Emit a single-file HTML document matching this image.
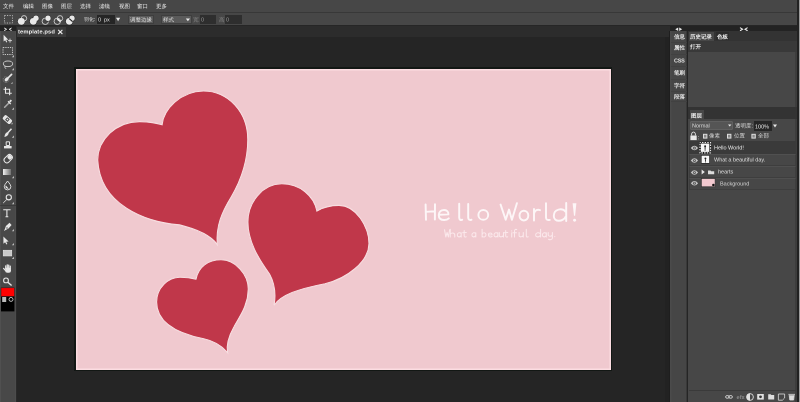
<!DOCTYPE html>
<html><head><meta charset="utf-8">
<style>
*{margin:0;padding:0;box-sizing:border-box}
html,body{width:800px;height:402px;overflow:hidden;background:#252525;font-family:"Liberation Sans",sans-serif;color:#e6e6e6}
.a{position:absolute}
#menubar{left:0;top:0;width:800px;height:13.3px;background:#474747;border-bottom:1.8px solid #383838}
.mi{position:absolute;top:-0.4px;font-size:11.4px;line-height:24px;color:#f2f2f2;white-space:nowrap;font-weight:normal;transform:scale(.5);transform-origin:0 0;will-change:transform}
#toolbar{left:0;top:12px;width:800px;height:14px;background:linear-gradient(transparent 0,transparent 1.3px,#474747 1.3px,#474747 13.4px,#262626 13.4px)}
.tt{position:absolute;font-size:11px;line-height:18px;transform:scale(.5);transform-origin:0 0;will-change:transform;color:#e0e0e0;white-space:nowrap}
.inp{position:absolute;background:#252525;height:9px;top:15px}
.btn{position:absolute;background:#5a5a5a;top:14.5px;height:9.5px;border:0.5px solid #3e3e3e}
#tabrow{left:0;top:26px;width:670px;height:11px;background:#2c2c2c}
#lefttools{left:0;top:31px;width:16.6px;height:371px;background:#484848;border-right:0.8px solid #2a2a2a;box-shadow:inset 1px 0 0 #505050,inset -1px 0 0 #4c4c4c}
#canvas{left:75.9px;top:68.9px;width:534.9px;height:300.8px;background:#f0c9cf;box-shadow:inset 0 0 0 1.5px #fcdde2}
#rcol{left:669.4px;top:31px;width:18.1px;height:371px;background:#464646;border-left:0.9px solid #1e1e1e;border-right:1.3px solid #393939;box-shadow:inset 1.5px 0 0 #4b4b4b}
#rpanel{left:687.5px;top:31px;width:112px;height:371px;background:#3d3d3d}
svg{position:absolute;overflow:visible}
</style></head><body>
<div id="menubar" class="a">
  <span class="mi" style="left:3px">文件</span>
  <span class="mi" style="left:22.7px">编辑</span>
  <span class="mi" style="left:41.6px">图像</span>
  <span class="mi" style="left:61.2px">图层</span>
  <span class="mi" style="left:80px">选择</span>
  <span class="mi" style="left:98.8px">滤镜</span>
  <span class="mi" style="left:118.8px">视图</span>
  <span class="mi" style="left:137.4px">窗口</span>
  <span class="mi" style="left:156.3px">更多</span>
</div>
<div id="toolbar" class="a">
  <svg style="left:0;top:0" width="250" height="14" viewBox="0 0 250 14">
    <rect x="4.5" y="3.5" width="8" height="7.5" fill="none" stroke="#cfcfcf" stroke-width="0.8" stroke-dasharray="1.2 1.3"/>
  </svg>
  <svg style="left:0;top:0" width="250" height="14" viewBox="0 0 250 14">
    <!-- icon1 new -->
    <g transform="translate(18,3)">
      <circle cx="3.3" cy="6.3" r="3.4" fill="#e8e8e8" stroke="#1c1c1c" stroke-width="0.9"/>
      <circle cx="6" cy="3.3" r="2.7" fill="none" stroke="#e8e8e8" stroke-width="0.8"/>
      <circle cx="3.3" cy="6.3" r="3.4" fill="#e8e8e8"/>
    </g>
    <g transform="translate(30,3)">
      <circle cx="3.3" cy="6.3" r="3.8" fill="#1c1c1c"/>
      <circle cx="6" cy="3.3" r="3.1" fill="#1c1c1c"/>
      <circle cx="3.3" cy="6.3" r="3.4" fill="#e8e8e8"/>
      <circle cx="6" cy="3.3" r="2.7" fill="#e8e8e8"/>
    </g>
    <g transform="translate(42,3)">
      <circle cx="3.3" cy="6.3" r="3.2" fill="none" stroke="#e0e0e0" stroke-width="0.8"/>
      <circle cx="6" cy="3.3" r="3.1" fill="#1c1c1c"/>
      <circle cx="6" cy="3.3" r="2.7" fill="#e8e8e8"/>
    </g>
    <g transform="translate(54,3)">
      <circle cx="3.3" cy="6.3" r="3.2" fill="none" stroke="#e0e0e0" stroke-width="0.8"/>
      <circle cx="6" cy="3.3" r="2.7" fill="none" stroke="#e0e0e0" stroke-width="0.8"/>
      <path d="M3.2 3.6 L6.6 6.6" stroke="#e8e8e8" stroke-width="1.6"/>
    </g>
    <g transform="translate(66,3)">
      <circle cx="3.3" cy="6.3" r="3.8" fill="#1c1c1c"/>
      <circle cx="6" cy="3.3" r="3.1" fill="#1c1c1c"/>
      <circle cx="3.3" cy="6.3" r="3.4" fill="#e8e8e8"/>
      <circle cx="6" cy="3.3" r="2.7" fill="#e8e8e8"/>
      <path d="M3.2 3.6 L6.6 6.6" stroke="#1c1c1c" stroke-width="1.2"/>
    </g>
    <path d="M116 5.8 L120.2 5.8 L118.1 9.2 Z" fill="#e8e8e8"/>
  </svg>
  <span class="tt" style="left:84px;font-size:10px;top:3px;color:#ececec">羽化:</span>
  <div class="inp" style="left:97px;width:17.5px;top:3px"></div>
  <span class="tt" style="left:98px;top:2.5px">0</span>
  <span class="tt" style="left:104px;top:2.5px">px</span>
  <div class="btn" style="left:128px;width:25.5px;top:2.5px"></div>
  <span class="tt" style="left:130px;top:2.5px">调整边缘</span>
  <div class="btn" style="left:161px;width:30.5px;top:2.5px"></div>
  <span class="tt" style="left:163px;top:2.5px">样式</span>
  <span class="tt" style="left:193px;top:2.5px;color:#8a8a8a">宽</span>
  <div class="inp" style="left:199.5px;width:16.5px;top:3px;background:#2e2e2e"></div>
  <span class="tt" style="left:200.5px;top:2.5px;color:#9a9a9a">0</span>
  <span class="tt" style="left:218.5px;top:2.5px;color:#8a8a8a">高</span>
  <div class="inp" style="left:225px;width:16.5px;top:3px;background:#2e2e2e"></div>
  <span class="tt" style="left:226px;top:2.5px;color:#9a9a9a">0</span>
  <svg style="left:0;top:0" width="250" height="14" viewBox="0 0 250 14"><path d="M185.8 6.6 L190 6.6 L187.9 9.2 Z" fill="#e8e8e8"/></svg>
</div>
<div id="tabrow" class="a"></div>
<div class="a" style="left:0;top:26px;width:16px;height:5px;background:#222"></div>
<svg style="left:0;top:26px" width="16" height="6" viewBox="0 0 16 6">
  <path d="M4.2 2 L6.6 3.3 L4.2 4.6 M11.6 2 L9.2 3.3 L11.6 4.6" fill="none" stroke="#e8e8e8" stroke-width="1"/>
</svg>
<div class="a" style="left:16.5px;top:27.2px;width:49px;height:10px;background:#3a3a3a"></div>
<span class="tt" style="left:18.3px;top:27.2px;color:#f4f4f4;font-weight:bold;font-size:11.6px;letter-spacing:0.2px">template.psd</span>
<svg style="left:0;top:26px" width="70" height="12" viewBox="0 0 70 12">
  <path d="M58.2 3.8 L62.4 8 M62.4 3.8 L58.2 8" stroke="#e8e8e8" stroke-width="1.1"/>
</svg>
<div id="lefttools" class="a"></div>
<svg style="left:0;top:0" width="16" height="402" viewBox="0 0 16 402">
 <!-- move -->
 <path d="M3.6 34.8 L3.6 41.6 L5.2 40.2 L6.3 42.4 L7.2 41.9 L6.2 39.8 L8.3 39.7 Z" fill="#e6e6e6"/>
 <path d="M10 38.6 V42.6 M8 40.6 H12" stroke="#e6e6e6" stroke-width="0.8"/>
 <!-- marquee -->
 <rect x="3" y="47.5" width="9.5" height="7" fill="none" stroke="#e6e6e6" stroke-width="0.8" stroke-dasharray="1.3 1"/>
 <path d="M14.0 55 L14.0 57.2 L11.8 57.2 Z" fill="#bdbdbd"/>
 <!-- lasso -->
 <ellipse cx="8" cy="63.8" rx="4.6" ry="2.8" fill="none" stroke="#e6e6e6" stroke-width="0.8"/>
 <path d="M5 66 Q4.5 68 6 68.8" fill="none" stroke="#e6e6e6" stroke-width="0.8"/>
 <path d="M14.0 68 L14.0 70.2 L11.8 70.2 Z" fill="#bdbdbd"/>
 <!-- quick select -->
 <circle cx="6" cy="79.6" r="2.9" fill="none" stroke="#b0b0b0" stroke-width="0.6" stroke-dasharray="0.9 0.7"/>
 <path d="M11.6 74.4 L8 78" stroke="#e6e6e6" stroke-width="1.7" stroke-linecap="round"/>
 <ellipse cx="6.6" cy="79.3" rx="2.3" ry="1.6" transform="rotate(-45 6.6 79.3)" fill="#e6e6e6"/>
 <path d="M12.6 82 L12.6 83.8 L10.8 83.8 Z" fill="#bdbdbd"/>
 <!-- crop -->
 <path d="M5.5 87 V93.2 H11.8 M3.5 89.2 H9.6 V95.2" fill="none" stroke="#e6e6e6" stroke-width="1.1"/>
 <!-- eyedropper -->
 <path d="M4.3 107.6 L9.3 102.6" stroke="#e6e6e6" stroke-width="1.3"/>
 <path d="M4.3 107.6 L9.3 102.6" stroke="#474747" stroke-width="0.4"/>
 <path d="M8 101.3 L10.8 104.1" stroke="#e6e6e6" stroke-width="1.3"/>
 <path d="M9.6 101.9 L11.4 100.1" stroke="#e6e6e6" stroke-width="1.8"/>
 <path d="M14.0 107.5 L14.0 109.7 L11.8 109.7 Z" fill="#bdbdbd"/>
 <!-- healing -->
 <g transform="rotate(40 7.4 119.6)"><rect x="2.6" y="117" width="9.6" height="5.2" rx="1.6" fill="#e6e6e6"/><rect x="5.8" y="117.9" width="3.2" height="3.4" fill="#474747"/><rect x="6.7" y="118.8" width="1.4" height="1.5" fill="#e6e6e6"/></g>
 <path d="M12.6 122.4 L12.6 124.2 L10.8 124.2 Z" fill="#bdbdbd"/>
 <!-- brush -->
 <path d="M11.5 128.8 L7.6 133" stroke="#e6e6e6" stroke-width="1.5"/>
 <path d="M7.8 132.2 Q5 132.2 4.4 137 Q8 136.5 8.6 133.6 Z" fill="#e6e6e6"/>
 <path d="M14.0 135.5 L14.0 137.7 L11.8 137.7 Z" fill="#bdbdbd"/>
 <!-- stamp -->
 <path d="M6.2 141.8 H9.5 V145.5 H6.2 Z" fill="none" stroke="#e6e6e6" stroke-width="1"/>
 <rect x="4" y="146" width="7.6" height="2.4" fill="#e6e6e6"/>
 <!-- eraser -->
 <g transform="rotate(-45 8.2 158.7)"><rect x="3.6" y="155.9" width="9.2" height="5.6" rx="2.6" fill="none" stroke="#e6e6e6" stroke-width="1"/><rect x="8.2" y="156.4" width="4.2" height="4.6" rx="1.8" fill="#e6e6e6"/></g>
 <!-- gradient -->
 <defs><linearGradient id="gr" x1="0" x2="1"><stop offset="0" stop-color="#f0f0f0"/><stop offset="1" stop-color="#707070"/></linearGradient></defs>
 <rect x="3" y="169" width="8" height="6" fill="url(#gr)"/>
 <path d="M14.0 176 L14.0 178.2 L11.8 178.2 Z" fill="#bdbdbd"/>
 <!-- blur drop -->
 <path d="M7.6 181 Q4.2 185 4.3 186.6 A3.3 3.3 0 0 0 10.9 186.6 Q11 185 7.6 181 Z" fill="none" stroke="#e6e6e6" stroke-width="0.9"/>
 <path d="M5.6 186.3 A2 2 0 0 0 8.6 188.4 L5.9 185.5 Z" fill="#e6e6e6"/>
 <!-- dodge -->
 <circle cx="8.8" cy="197.3" r="2.6" fill="none" stroke="#e6e6e6" stroke-width="1.1"/>
 <path d="M6.9 199.4 L3.2 203" stroke="#e6e6e6" stroke-width="0.9"/>
 <path d="M14.0 202 L14.0 204.2 L11.8 204.2 Z" fill="#bdbdbd"/>
 <rect x="0" y="205.3" width="16" height="0.6" fill="#333"/>
 <!-- T -->
 <path d="M3.2 209.8 H10.6 M6.9 209.8 V217 M5.5 216.8 H8.3" fill="none" stroke="#e6e6e6" stroke-width="1.1"/>
 <!-- pen -->
 <path d="M9.5 222.8 L11.6 224.9 L8.5 228.6 Q6 229.8 4 231 Q5 229 5.9 226.1 Z" fill="#e6e6e6"/>
 <circle cx="7" cy="228" r="0.7" fill="#474747"/>
 <path d="M14.0 229 L14.0 231.2 L11.8 231.2 Z" fill="#bdbdbd"/>
 <!-- path select -->
 <path d="M3.4 236.4 L3.4 243.8 L5.1 242.2 L6.4 244.6 L7.4 244 L6.2 241.7 L8.6 241.6 Z" fill="#e6e6e6"/>
 <path d="M14.0 243 L14.0 245.2 L11.8 245.2 Z" fill="#bdbdbd"/>
 <!-- rect -->
 <rect x="3.3" y="250.3" width="8.4" height="5.6" fill="#c8c8c8" stroke="#e6e6e6" stroke-width="0.7"/>
 <path d="M14.0 256.8 L14.0 259.0 L11.8 259.0 Z" fill="#bdbdbd"/>
 <!-- hand -->
 <rect x="5.2" y="267.6" width="5.8" height="5.2" rx="2" fill="#e6e6e6"/>
 <rect x="5.1" y="265.2" width="1.3" height="4" rx="0.6" fill="#e6e6e6"/>
 <rect x="6.6" y="264.2" width="1.3" height="4.5" rx="0.6" fill="#e6e6e6"/>
 <rect x="8.1" y="264.5" width="1.3" height="4.3" rx="0.6" fill="#e6e6e6"/>
 <rect x="9.6" y="265.6" width="1.3" height="3.8" rx="0.6" fill="#e6e6e6"/>
 <path d="M5.6 270.6 L3.6 268.4" stroke="#e6e6e6" stroke-width="1.3" stroke-linecap="round"/>
 <!-- zoom -->
 <circle cx="6" cy="280.4" r="2.4" fill="none" stroke="#e6e6e6" stroke-width="1.1"/>
 <path d="M7.8 282.2 L11.6 285.6" stroke="#e6e6e6" stroke-width="1.4"/>
 <!-- colors -->
 <rect x="1" y="295.8" width="13.4" height="15.6" fill="#000"/>
 <rect x="1" y="287.8" width="13.4" height="8.6" fill="#ff0000" stroke="#222" stroke-width="0.5"/>
 <rect x="2.2" y="297" width="4" height="5" fill="#bbb"/>
 <circle cx="11" cy="299.4" r="2" fill="none" stroke="#ccc" stroke-width="0.9"/>
</svg>
<div class="a" style="left:73.9px;top:66.8px;width:538.1px;height:304.5px;background:#121714"></div>
<div id="canvas" class="a"></div>
<svg style="left:0;top:0" width="800" height="402" viewBox="0 0 800 402">
  <g fill="#c0374a" stroke="#f7dde0" stroke-width="1.1">
    <path d="M162.1 124.8 C163.5 110 180 91.2 203.5 91 C228 91 247.8 112 247.8 139.5 C247.8 163 240 182 231.2 197 C222 212 215.8 226 217.3 244.6 C211 235.5 196 229 179.5 224.9 C145 222 100 205 97.7 160 C97.8 140 116 121.4 139.8 121.6 C148 121.8 157 123 162.1 124.8 Z"/>
    <path d="M316.9 211 C314 196 300 183.8 281.8 183.8 C262 183.8 247.9 203 247.9 222 C247.9 241 258 258 269.5 274 C275.5 285 275.5 297 274.1 305.2 C281.3 295 298 289 325 283.7 C346 279 369 262 369 243.5 C369 227 356 205.4 339 205.4 C330 205.4 321 208.5 316.9 211 Z"/>
    <path d="M196 279.1 C198.5 267 208 259.8 221 259.8 C235 259.8 248.3 274 248.3 289 C248.3 306 238.5 318 233.9 326.9 C228.8 336 226.2 345 227.6 352.6 C222.5 346.5 214 341 203.7 338.8 C180 334 156.6 324 156.6 302 C156.6 288 168 277.2 180 277.2 C187 277.2 193 278.3 196 279.1 Z"/>
  </g>
</svg>
<svg style="left:0;top:0" width="800" height="402" viewBox="0 0 800 402">
  <g fill="none" stroke="#fdf6f7" stroke-width="1.95" stroke-linecap="round" stroke-linejoin="round">
    <path d="M425.6 204.4 L426 219.8 M435 204.2 L434.9 219.6 M426 211.9 L434.8 211.3"/>
    <path d="M438.8 214.8 L448.4 214.4 C448.6 211.6 446.6 209.9 444 209.9 C440.8 209.9 438.8 212.2 438.8 215.2 C438.8 218.4 441.2 220 444.2 220 C446.4 220 447.8 219.4 448.8 218.4"/>
    <path d="M459.2 203.8 L459.2 217.5 C459.2 219.6 460.3 220.2 462.2 219.8"/>
    <path d="M468.2 204 L468.2 217.5 C468.2 219.6 469.5 220.2 471.5 219.8"/>
    <ellipse cx="483.3" cy="214.9" rx="4.9" ry="4.9"/>
    <path d="M500.6 204.6 L505.7 219.7 L509 209.6 L511.9 219.7 L516.9 203.2"/>
    <ellipse cx="523.9" cy="215.6" rx="4.4" ry="4.8"/>
    <path d="M534 209 L534 220.6 M534 213.5 C535 210.2 537.5 209.2 540 210.2"/>
    <path d="M546 203.2 L546 217.6 C546 219.8 547.5 220.4 549.8 219.9"/>
    <path d="M565.8 212 C564 209.5 561 209 558.5 209.6 C555 210.5 553.8 213.5 553.8 216 C553.8 219 556 220.8 558.8 220.8 C561.8 220.8 564.5 219 565.8 216.5 M566.2 203 L566.2 221"/>
  </g>
  <path d="M572.6 203.2 L576.4 203.2 L575.1 215.8 L574 215.8 Z" fill="#fdf6f7"/>
  <circle cx="574.6" cy="220.2" r="1.45" fill="#fdf6f7"/>
  <g fill="none" stroke="#fbe8eb" stroke-width="1.05" stroke-linecap="round" stroke-linejoin="round"><path transform="translate(444.5 237)" d="M0 -7.3 L1.3 0 L2.6 -4.6 L3.9 0 L5.2 -7.3"/><path transform="translate(449.75 237)" d="M0.5 -7.7 L0.5 0 M0.5 -2.6 C1 -4.5 5 -4.8 5 -2 L5 0"/><path transform="translate(456.9 237)" d="M4.2 -3.5 C3.5 -4.7 0.4 -4.7 0.4 -2 C0.4 0.4 3.5 0.4 4.2 -1.5 M4.3 -4.3 L4.3 0"/><path transform="translate(462.5 237)" d="M1.7 -6.6 L1.7 -0.9 C1.7 0 2.7 0.1 3.7 -0.3 M0.1 -4.2 L3.8 -4.4"/><path transform="translate(471.5 237)" d="M4.2 -3.5 C3.5 -4.7 0.4 -4.7 0.4 -2 C0.4 0.4 3.5 0.4 4.2 -1.5 M4.3 -4.3 L4.3 0"/><path transform="translate(481.6 237)" d="M0.5 -7.7 L0.5 0 M0.5 -2.4 C1.1 -4.8 4.4 -4.9 4.4 -2.2 C4.4 0.4 1.2 0.4 0.5 -0.9"/><path transform="translate(488 237)" d="M0.4 -2.1 L4.1 -2.3 C4.1 -4.3 0.4 -4.9 0.4 -2 C0.4 0.3 3.3 0.3 4.1 -0.6"/><path transform="translate(493.6 237)" d="M4.2 -3.5 C3.5 -4.7 0.4 -4.7 0.4 -2 C0.4 0.4 3.5 0.4 4.2 -1.5 M4.3 -4.3 L4.3 0"/><path transform="translate(498.8 237)" d="M0.5 -4.4 L0.5 -1.6 C0.5 0.4 4.3 0.4 4.6 -2 M4.7 -4.4 L4.7 0"/><path transform="translate(504 237)" d="M1.7 -6.6 L1.7 -0.9 C1.7 0 2.7 0.1 3.7 -0.3 M0.1 -4.2 L3.8 -4.4"/><path transform="translate(510.9 237)" d="M0.8 -4.2 L0.8 0 M0.8 -6.3 L0.8 -6.1"/><path transform="translate(512.9 237)" d="M3.8 -7.4 C2.5 -8 1.6 -7.3 1.6 -5.6 L1.6 0 M0 -4.2 L3.6 -4.3"/><path transform="translate(518.6 237)" d="M0.5 -4.4 L0.5 -1.6 C0.5 0.4 4.3 0.4 4.6 -2 M4.7 -4.4 L4.7 0"/><path transform="translate(525.5 237)" d="M0.8 -7.7 L0.8 -1 C0.8 0 1.8 0.2 2.7 -0.2"/><path transform="translate(535.2 237)" d="M5 -3.3 C4.2 -4.8 0.4 -4.8 0.4 -2 C0.4 0.4 4.1 0.4 5 -1.4 M5.4 -7.7 L5.4 0"/><path transform="translate(542 237)" d="M4.2 -3.5 C3.5 -4.7 0.4 -4.7 0.4 -2 C0.4 0.4 3.5 0.4 4.2 -1.5 M4.3 -4.3 L4.3 0"/><path transform="translate(547.8 237)" d="M0.4 -4.4 L0.4 -2.1 C0.4 -0.3 4 -0.3 4.4 -2.2 M4.6 -4.4 L4.6 1.1 C4.6 2.8 2 3 0.8 2.2"/><path transform="translate(554 237)" d="M0.8 -0.5 L0.8 -0.4"/></g>
</svg>
<div class="a" style="left:670px;top:26px;width:130px;height:5px;background:#232323"></div>
<div class="a" style="left:664.6px;top:37px;width:4.8px;height:365px;background:#222"></div>
<div id="rcol" class="a"></div>
<svg style="left:0;top:0" width="800" height="40" viewBox="0 0 800 40">
  <path d="M675.2 29.2 L678.2 27.4 L678.2 31 Z M682.2 29.2 L679.2 27.4 L679.2 31 Z" fill="#e8e8e8"/>
  <path d="M740 27.6 L742.6 29.2 L740 30.8 M747.6 27.6 L745 29.2 L747.6 30.8" fill="none" stroke="#eee" stroke-width="1.1"/>
</svg>
<div class="a" style="left:670.5px;top:42px;width:16px;height:0.6px;background:#414141"></div><div class="a" style="left:670.5px;top:53.9px;width:16px;height:0.6px;background:#414141"></div><div class="a" style="left:670.5px;top:65.8px;width:16px;height:0.6px;background:#414141"></div><div class="a" style="left:670.5px;top:78.5px;width:16px;height:0.6px;background:#414141"></div><div class="a" style="left:670.5px;top:90.5px;width:16px;height:0.6px;background:#414141"></div><div class="a" style="left:670.5px;top:101px;width:16px;height:0.6px;background:#414141"></div>
<span class="tt" style="left:673.5px;top:32px;font-weight:bold;color:#e4e4e4">信息</span>
<span class="tt" style="left:673.5px;top:43.2px;font-weight:bold;color:#e4e4e4">属性</span>
<span class="tt" style="left:673.5px;top:55.5px;letter-spacing:-0.5px;font-weight:bold;color:#e4e4e4">CSS</span>
<span class="tt" style="left:673.5px;top:67.8px;font-weight:bold;color:#e4e4e4">笔刷</span>
<span class="tt" style="left:673.5px;top:81px;font-weight:bold;color:#e4e4e4">字符</span>
<span class="tt" style="left:673.5px;top:92.4px;font-weight:bold;color:#e4e4e4">段落</span>
<div id="rpanel" class="a"></div>
<div class="a" style="left:688px;top:31px;width:109.4px;height:10.2px;background:#333"></div>
<div class="a" style="left:689px;top:31.8px;width:24.5px;height:9.2px;background:#474747"></div>
<span class="tt" style="left:690px;top:32px;color:#eee;font-weight:bold">历史记录</span>
<div class="a" style="left:715.6px;top:31.9px;width:13.8px;height:8.4px;background:#2c2c2c"></div>
<span class="tt" style="left:716.5px;top:32px;color:#eee;font-weight:bold">色板</span>
<div class="a" style="left:688px;top:41.2px;width:109.4px;height:10.5px;background:#393939"></div>
<span class="tt" style="left:690px;top:41.5px;color:#eee;font-weight:bold">打开</span>
<div class="a" style="left:688px;top:51.7px;width:107px;height:55.7px;background:#474747"></div>
<div class="a" style="left:688px;top:107.4px;width:109.4px;height:11.2px;background:#333"></div>
<div class="a" style="left:689.5px;top:109.6px;width:14.5px;height:9.2px;background:#474747"></div>
<span class="tt" style="left:690.8px;top:110.6px;color:#eee;font-weight:bold">图层</span>
<div class="a" style="left:688px;top:118.6px;width:107px;height:283.4px;background:#474747"></div>


<!-- layers controls -->
<div class="a" style="left:690px;top:121px;width:43.3px;height:9.4px;background:#555;border:0.6px solid #606060;border-radius:1px"></div>
<span class="tt" style="left:692px;top:121.3px;color:#ddd">Normal</span>
<span class="tt" style="left:735px;top:121.3px;color:#ddd">透明度:</span>
<div class="a" style="left:754px;top:121px;width:17.5px;height:9.7px;background:#262626"></div>
<span class="tt" style="left:755px;top:121.5px;color:#eee">100%</span>
<span class="tt" style="left:703px;top:131.1px;color:#ddd;left:709px">像素</span>
<span class="tt" style="left:734px;top:131.1px;color:#ddd">位置</span>
<span class="tt" style="left:758px;top:131.1px;color:#ddd">全部</span>
<svg style="left:0;top:0" width="800" height="402" viewBox="0 0 800 402">
  <path d="M728 124.6 L731.4 124.6 L729.7 126.6 Z" fill="#e8e8e8"/>
  <path d="M773 124.6 L777 124.6 L775 127.4 Z" fill="#e8e8e8"/>
  <!-- lock -->
  <path d="M691.6 135.6 V134 A1.9 1.9 0 0 1 695.4 134 V135.6" fill="none" stroke="#e8e8e8" stroke-width="0.9"/>
  <rect x="690.4" y="135.5" width="6.3" height="4.6" fill="#e8e8e8"/>
  <rect x="698" y="136" width="0.7" height="0.7" fill="#ccc"/><rect x="698" y="138.6" width="0.7" height="0.7" fill="#ccc"/>
  <rect x="703" y="133.8" width="4.4" height="4.8" fill="#ddd"/><rect x="704" y="134.8" width="2.4" height="2.8" fill="#888"/>
  <rect x="727" y="133.8" width="4.4" height="4.8" fill="#ddd"/><rect x="728" y="134.8" width="2.4" height="2.8" fill="#888"/>
  <rect x="751.4" y="133.8" width="4.4" height="4.8" fill="#ddd"/><rect x="752.4" y="134.8" width="2.4" height="2.8" fill="#888"/>
</svg>
<!-- rows -->
<div class="a" style="left:688.5px;top:141px;width:107px;height:12.6px;background:#3a3a3a"></div>
<div class="a" style="left:688.5px;top:153.6px;width:107px;height:12.6px;background:#474747;border:0.6px solid #3e3e3e;border-top-color:#505050"></div>
<div class="a" style="left:688.5px;top:166.2px;width:107px;height:12px;background:#474747;border:0.6px solid #3e3e3e;border-top-color:#505050"></div>
<div class="a" style="left:688.5px;top:178.2px;width:107px;height:12px;background:#474747;border:0.6px solid #3e3e3e;border-top-color:#505050"></div>
<svg style="left:0;top:0" width="800" height="402" viewBox="0 0 800 402">
  <g transform="translate(690.8 145.5)"><path d="M0 2.6 Q3.65 -1.9 7.3 2.6 Q3.65 7.1 0 2.6 Z" fill="#c4c4c4"/><circle cx="3.65" cy="2.6" r="1.5" fill="#5a5a5a"/><circle cx="3.65" cy="2.6" r="0.6" fill="#bbb"/></g>
  <g transform="translate(690.8 157.8)"><path d="M0 2.6 Q3.65 -1.9 7.3 2.6 Q3.65 7.1 0 2.6 Z" fill="#c4c4c4"/><circle cx="3.65" cy="2.6" r="1.5" fill="#5a5a5a"/><circle cx="3.65" cy="2.6" r="0.6" fill="#bbb"/></g>
  <g transform="translate(690.8 169.8)"><path d="M0 2.6 Q3.65 -1.9 7.3 2.6 Q3.65 7.1 0 2.6 Z" fill="#c4c4c4"/><circle cx="3.65" cy="2.6" r="1.5" fill="#5a5a5a"/><circle cx="3.65" cy="2.6" r="0.6" fill="#bbb"/></g>
  <g transform="translate(690.8 180.6)"><path d="M0 2.6 Q3.65 -1.9 7.3 2.6 Q3.65 7.1 0 2.6 Z" fill="#c4c4c4"/><circle cx="3.65" cy="2.6" r="1.5" fill="#5a5a5a"/><circle cx="3.65" cy="2.6" r="0.6" fill="#bbb"/></g>
  <!-- thumb 1 selected -->
  <rect x="699.3" y="141.8" width="11.9" height="11.8" fill="#151515"/>
  <rect x="700" y="142.5" width="10.5" height="10.4" fill="none" stroke="#e8e8e8" stroke-width="1.2" stroke-dasharray="1.5 1.15" stroke-dashoffset="0.7"/>
  <rect x="700.9" y="143.5" width="8.4" height="8.4" fill="#f7f7f7"/>
  <circle cx="705.1" cy="146.3" r="1" fill="#222"/><rect x="704.6" y="147" width="1" height="2.6" fill="#333"/><circle cx="705.1" cy="150.2" r="0.6" fill="#555"/>
  <!-- thumb 2 -->
  <rect x="701.1" y="155.2" width="8.6" height="8.3" fill="#1c1c1c"/>
  <rect x="701.6" y="155.7" width="7.6" height="7.3" fill="#f7f7f7"/>
  <circle cx="705.4" cy="158.4" r="0.95" fill="#222"/><rect x="705" y="159.2" width="0.9" height="2.4" fill="#222"/><circle cx="705.45" cy="162" r="0.5" fill="#444"/>
  <!-- folder row -->
  <path d="M701.6 169.6 L704.8 172 L701.6 174.4 Z" fill="#e8e8e8"/>
  <path d="M708 170.4 H710.5 L711.2 171.2 H714.2 V174.2 H708 Z" fill="#ddd"/>
  <!-- bg thumb -->
  <rect x="701.3" y="178.6" width="13.8" height="8.2" fill="#f2c9cf" stroke="#2a2a2a" stroke-width="0.6"/>
  <circle cx="713.4" cy="185" r="1.3" fill="#111"/>
</svg>
<span class="tt" style="left:714px;top:143px;color:#f0f0f0">Hello World!</span>
<span class="tt" style="left:713.5px;top:155px;color:#e0e0e0">What a beautiful day.</span>
<span class="tt" style="left:718px;top:167px;color:#e0e0e0">hearts</span>
<span class="tt" style="left:720px;top:178.5px;color:#d8d8d8">Background</span>
<!-- bottom bar -->
<div class="a" style="left:688.5px;top:389.8px;width:107px;height:0.7px;background:#3a3a3a"></div>
<svg style="left:0;top:0" width="800" height="402" viewBox="0 0 800 402">
  <g fill="none" stroke="#d8d8d8" stroke-width="0.9">
    <rect x="725.6" y="395.6" width="3.6" height="2.6" rx="1.3"/><rect x="728.8" y="395.6" width="3.6" height="2.6" rx="1.3"/>
  </g>
  <text x="736.6" y="398.8" font-size="5.6" font-family="Liberation Sans" font-weight="bold" fill="#8a8a8a">efx</text>
  <circle cx="750" cy="397" r="3.4" fill="none" stroke="#e0e0e0" stroke-width="0.9"/>
  <path d="M750 393.6 A3.4 3.4 0 0 0 750 400.4 Z" fill="#e0e0e0"/>
  <rect x="757.2" y="394" width="6.6" height="5.6" fill="#e0e0e0"/><circle cx="760.5" cy="396.8" r="1.4" fill="#333"/>
  <path d="M768.2 394.2 H770.6 L771.4 395 H774.2 V399.6 H768.2 Z" fill="#ddd"/>
  <path d="M778.4 394 H784.6 V398 L782.4 400.2 H778.4 Z" fill="none" stroke="#ddd" stroke-width="0.8"/>
  <path d="M788.4 394.4 H795 M789.2 395.2 L789.8 400 H793.6 L794.2 395.2" fill="#ddd" stroke="#ddd" stroke-width="0.8"/>
</svg>
<div class="a" style="left:797.4px;top:0;width:1.2px;height:402px;background:#222"></div>
<div class="a" style="left:798.6px;top:0;width:1.4px;height:402px;background:#9a9a9a"></div>
</body></html>
